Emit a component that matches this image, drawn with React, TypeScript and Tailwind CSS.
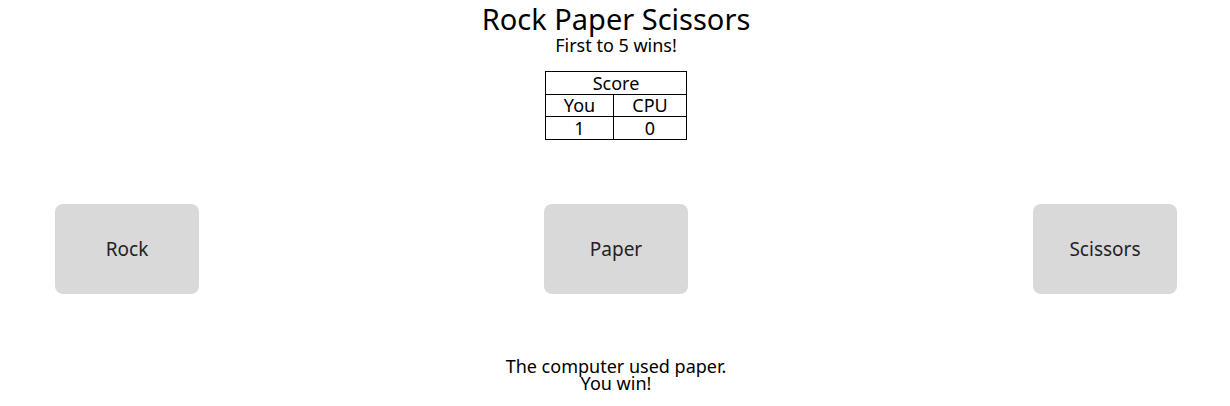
import React from 'react';

const choices = ['Rock', 'Paper', 'Scissors'];

export default function App() {
  return (
    <div className="w-[1230px] h-[406px] bg-white text-black flex flex-col items-center pl-[2px]" style={{ fontFamily: '"Noto Sans", sans-serif' }}>
      <h1 className="text-[29px] leading-[28px] mt-[5px]">Rock Paper Scissors</h1>
      <p className="text-[18px] leading-[22px] mt-[1px]">First to 5 wins!</p>

      <table className="mt-[15px] border-collapse text-[18px] leading-[21px]">
        <thead>
          <tr>
            <th colSpan={2} className="border border-black font-normal h-[23px] p-0">Score</th>
          </tr>
          <tr>
            <th className="border border-black font-normal w-[68px] h-[22px] p-0">You</th>
            <th className="border border-black font-normal w-[73px] h-[22px] p-0">CPU</th>
          </tr>
        </thead>
        <tbody>
          <tr>
            <td className="border border-black text-center h-[23px] p-0">1</td>
            <td className="border border-black text-center h-[23px] p-0">0</td>
          </tr>
        </tbody>
      </table>

      <div className="w-full flex justify-between px-[53px] mt-[64px]">
        {choices.map((c) => (
          <button key={c} className="w-[144px] h-[90px] rounded-[8px] bg-[#d9d9d9] text-[19px] text-[#222]">
            {c}
          </button>
        ))}
      </div>

      <div className="mt-[64px] text-[18px] leading-[17px] text-center">
        <p>The computer used paper.</p>
        <p>You win!</p>
      </div>
    </div>
  );
}
